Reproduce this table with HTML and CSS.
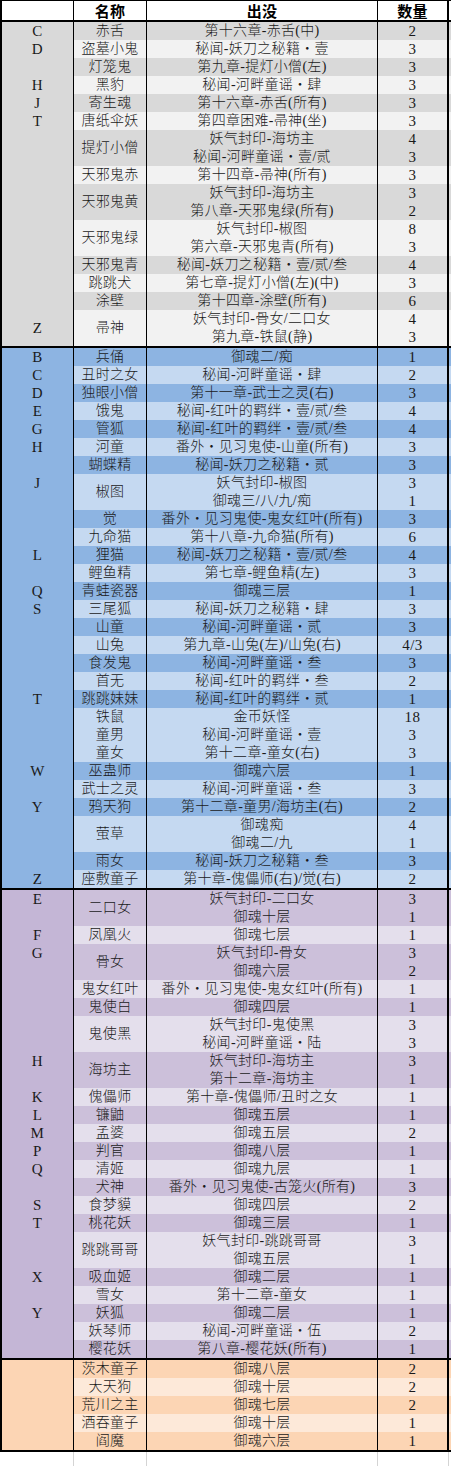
FILE: index.html
```html
<!DOCTYPE html>
<html lang="zh-CN">
<head>
<meta charset="utf-8">
<title>式神出没</title>
<link rel="stylesheet" href="styles.css">
</head>
<body>
<div class="sheet">
  <div class="head">
    <div class="c c1"></div><div class="c c2">名称</div><div class="c c3">出没</div><div class="c c4">数量</div><div class="c c5"></div>
  </div>

  <div class="group g1">
    <div class="entry d"><div class="c c1">C</div><div class="c c2">赤舌</div><div class="c c3">第十六章-赤舌(中)</div><div class="c c4">2</div><div class="c c5"></div></div>
    <div class="entry l"><div class="c c1">D</div><div class="c c2">盗墓小鬼</div><div class="c c3">秘闻-妖刀之秘籍・壹</div><div class="c c4">3</div><div class="c c5"></div></div>
    <div class="entry d"><div class="c c1"></div><div class="c c2">灯笼鬼</div><div class="c c3">第九章-提灯小僧(左)</div><div class="c c4">3</div><div class="c c5"></div></div>
    <div class="entry l"><div class="c c1">H</div><div class="c c2">黑豹</div><div class="c c3">秘闻-河畔童谣・肆</div><div class="c c4">3</div><div class="c c5"></div></div>
    <div class="entry d"><div class="c c1">J</div><div class="c c2">寄生魂</div><div class="c c3">第十六章-赤舌(所有)</div><div class="c c4">3</div><div class="c c5"></div></div>
    <div class="entry l"><div class="c c1">T</div><div class="c c2">唐纸伞妖</div><div class="c c3">第四章困难-帚神(坐)</div><div class="c c4">3</div><div class="c c5"></div></div>
    <div class="entry d"><div class="c c1 s2"></div><div class="c c2 s2">提灯小僧</div><div class="c c3">妖气封印-海坊主</div><div class="c c4">4</div><div class="c c5"></div><div class="c c3">秘闻-河畔童谣・壹/贰</div><div class="c c4">3</div><div class="c c5"></div></div>
    <div class="entry l"><div class="c c1"></div><div class="c c2">天邪鬼赤</div><div class="c c3">第十四章-帚神(所有)</div><div class="c c4">3</div><div class="c c5"></div></div>
    <div class="entry d"><div class="c c1 s2"></div><div class="c c2 s2">天邪鬼黄</div><div class="c c3">妖气封印-海坊主</div><div class="c c4">3</div><div class="c c5"></div><div class="c c3">第八章-天邪鬼绿(所有)</div><div class="c c4">2</div><div class="c c5"></div></div>
    <div class="entry l"><div class="c c1 s2"></div><div class="c c2 s2">天邪鬼绿</div><div class="c c3">妖气封印-椒图</div><div class="c c4">8</div><div class="c c5"></div><div class="c c3">第六章-天邪鬼青(所有)</div><div class="c c4">3</div><div class="c c5"></div></div>
    <div class="entry d"><div class="c c1"></div><div class="c c2">天邪鬼青</div><div class="c c3">秘闻-妖刀之秘籍・壹/贰/叁</div><div class="c c4">4</div><div class="c c5"></div></div>
    <div class="entry l"><div class="c c1"></div><div class="c c2">跳跳犬</div><div class="c c3">第七章-提灯小僧(左)(中)</div><div class="c c4">3</div><div class="c c5"></div></div>
    <div class="entry d"><div class="c c1"></div><div class="c c2">涂壁</div><div class="c c3">第十四章-涂壁(所有)</div><div class="c c4">6</div><div class="c c5"></div></div>
    <div class="entry l"><div class="c c1 s2">Z</div><div class="c c2 s2">帚神</div><div class="c c3">妖气封印-骨女/二口女</div><div class="c c4">4</div><div class="c c5"></div><div class="c c3">第九章-铁鼠(静)</div><div class="c c4">3</div><div class="c c5"></div></div>
  </div>

  <div class="group g2">
    <div class="entry d"><div class="c c1">B</div><div class="c c2">兵俑</div><div class="c c3">御魂二/痴</div><div class="c c4">1</div><div class="c c5"></div></div>
    <div class="entry l"><div class="c c1">C</div><div class="c c2">丑时之女</div><div class="c c3">秘闻-河畔童谣・肆</div><div class="c c4">2</div><div class="c c5"></div></div>
    <div class="entry d"><div class="c c1">D</div><div class="c c2">独眼小僧</div><div class="c c3">第十一章-武士之灵(右)</div><div class="c c4">3</div><div class="c c5"></div></div>
    <div class="entry l"><div class="c c1">E</div><div class="c c2">饿鬼</div><div class="c c3">秘闻-红叶的羁绊・壹/贰/叁</div><div class="c c4">4</div><div class="c c5"></div></div>
    <div class="entry d"><div class="c c1">G</div><div class="c c2">管狐</div><div class="c c3">秘闻-红叶的羁绊・壹/贰/叁</div><div class="c c4">4</div><div class="c c5"></div></div>
    <div class="entry l"><div class="c c1">H</div><div class="c c2">河童</div><div class="c c3">番外・见习鬼使-山童(所有)</div><div class="c c4">3</div><div class="c c5"></div></div>
    <div class="entry d"><div class="c c1"></div><div class="c c2">蝴蝶精</div><div class="c c3">秘闻-妖刀之秘籍・贰</div><div class="c c4">3</div><div class="c c5"></div></div>
    <div class="entry l"><div class="c c1 s2 top">J</div><div class="c c2 s2">椒图</div><div class="c c3">妖气封印-椒图</div><div class="c c4">3</div><div class="c c5"></div><div class="c c3">御魂三/八/九/痴</div><div class="c c4">1</div><div class="c c5"></div></div>
    <div class="entry d"><div class="c c1"></div><div class="c c2">觉</div><div class="c c3">番外・见习鬼使-鬼女红叶(所有)</div><div class="c c4">3</div><div class="c c5"></div></div>
    <div class="entry l"><div class="c c1"></div><div class="c c2">九命猫</div><div class="c c3">第十八章-九命猫(所有)</div><div class="c c4">6</div><div class="c c5"></div></div>
    <div class="entry d"><div class="c c1">L</div><div class="c c2">狸猫</div><div class="c c3">秘闻-妖刀之秘籍・壹/贰/叁</div><div class="c c4">4</div><div class="c c5"></div></div>
    <div class="entry l"><div class="c c1"></div><div class="c c2">鲤鱼精</div><div class="c c3">第七章-鲤鱼精(左)</div><div class="c c4">3</div><div class="c c5"></div></div>
    <div class="entry d"><div class="c c1">Q</div><div class="c c2">青蛙瓷器</div><div class="c c3">御魂三层</div><div class="c c4">1</div><div class="c c5"></div></div>
    <div class="entry l"><div class="c c1">S</div><div class="c c2">三尾狐</div><div class="c c3">秘闻-妖刀之秘籍・肆</div><div class="c c4">3</div><div class="c c5"></div></div>
    <div class="entry d"><div class="c c1"></div><div class="c c2">山童</div><div class="c c3">秘闻-河畔童谣・贰</div><div class="c c4">3</div><div class="c c5"></div></div>
    <div class="entry l"><div class="c c1"></div><div class="c c2">山兔</div><div class="c c3">第九章-山兔(左)/山兔(右)</div><div class="c c4">4/3</div><div class="c c5"></div></div>
    <div class="entry d"><div class="c c1"></div><div class="c c2">食发鬼</div><div class="c c3">秘闻-河畔童谣・叁</div><div class="c c4">3</div><div class="c c5"></div></div>
    <div class="entry l"><div class="c c1"></div><div class="c c2">首无</div><div class="c c3">秘闻-红叶的羁绊・叁</div><div class="c c4">2</div><div class="c c5"></div></div>
    <div class="entry d"><div class="c c1">T</div><div class="c c2">跳跳妹妹</div><div class="c c3">秘闻-红叶的羁绊・贰</div><div class="c c4">1</div><div class="c c5"></div></div>
    <div class="entry l"><div class="c c1"></div><div class="c c2">铁鼠</div><div class="c c3">金币妖怪</div><div class="c c4">18</div><div class="c c5"></div></div>
    <div class="entry l"><div class="c c1"></div><div class="c c2">童男</div><div class="c c3">秘闻-河畔童谣・壹</div><div class="c c4">3</div><div class="c c5"></div></div>
    <div class="entry l"><div class="c c1"></div><div class="c c2">童女</div><div class="c c3">第十二章-童女(右)</div><div class="c c4">3</div><div class="c c5"></div></div>
    <div class="entry d"><div class="c c1">W</div><div class="c c2">巫蛊师</div><div class="c c3">御魂六层</div><div class="c c4">1</div><div class="c c5"></div></div>
    <div class="entry l"><div class="c c1"></div><div class="c c2">武士之灵</div><div class="c c3">秘闻-河畔童谣・叁</div><div class="c c4">3</div><div class="c c5"></div></div>
    <div class="entry d"><div class="c c1">Y</div><div class="c c2">鸦天狗</div><div class="c c3">第十二章-童男/海坊主(右)</div><div class="c c4">2</div><div class="c c5"></div></div>
    <div class="entry l"><div class="c c1 s2"></div><div class="c c2 s2">萤草</div><div class="c c3">御魂痴</div><div class="c c4">4</div><div class="c c5"></div><div class="c c3">御魂二/九</div><div class="c c4">1</div><div class="c c5"></div></div>
    <div class="entry d"><div class="c c1"></div><div class="c c2">雨女</div><div class="c c3">秘闻-妖刀之秘籍・叁</div><div class="c c4">3</div><div class="c c5"></div></div>
    <div class="entry l"><div class="c c1">Z</div><div class="c c2">座敷童子</div><div class="c c3">第十章-傀儡师(右)/觉(右)</div><div class="c c4">2</div><div class="c c5"></div></div>
  </div>

  <div class="group g3">
    <div class="entry d"><div class="c c1 s2 top">E</div><div class="c c2 s2">二口女</div><div class="c c3">妖气封印-二口女</div><div class="c c4">3</div><div class="c c5"></div><div class="c c3">御魂十层</div><div class="c c4">1</div><div class="c c5"></div></div>
    <div class="entry l"><div class="c c1">F</div><div class="c c2">凤凰火</div><div class="c c3">御魂七层</div><div class="c c4">1</div><div class="c c5"></div></div>
    <div class="entry d"><div class="c c1 s2 top">G</div><div class="c c2 s2">骨女</div><div class="c c3">妖气封印-骨女</div><div class="c c4">3</div><div class="c c5"></div><div class="c c3">御魂六层</div><div class="c c4">2</div><div class="c c5"></div></div>
    <div class="entry l"><div class="c c1"></div><div class="c c2">鬼女红叶</div><div class="c c3">番外・见习鬼使-鬼女红叶(所有)</div><div class="c c4">1</div><div class="c c5"></div></div>
    <div class="entry d"><div class="c c1"></div><div class="c c2">鬼使白</div><div class="c c3">御魂四层</div><div class="c c4">1</div><div class="c c5"></div></div>
    <div class="entry l"><div class="c c1 s2"></div><div class="c c2 s2">鬼使黑</div><div class="c c3">妖气封印-鬼使黑</div><div class="c c4">3</div><div class="c c5"></div><div class="c c3">秘闻-河畔童谣・陆</div><div class="c c4">3</div><div class="c c5"></div></div>
    <div class="entry d"><div class="c c1 s2 top">H</div><div class="c c2 s2">海坊主</div><div class="c c3">妖气封印-海坊主</div><div class="c c4">3</div><div class="c c5"></div><div class="c c3">第十二章-海坊主</div><div class="c c4">1</div><div class="c c5"></div></div>
    <div class="entry l"><div class="c c1">K</div><div class="c c2">傀儡师</div><div class="c c3">第十章-傀儡师/丑时之女</div><div class="c c4">1</div><div class="c c5"></div></div>
    <div class="entry d"><div class="c c1">L</div><div class="c c2">镰鼬</div><div class="c c3">御魂五层</div><div class="c c4">1</div><div class="c c5"></div></div>
    <div class="entry l"><div class="c c1">M</div><div class="c c2">孟婆</div><div class="c c3">御魂五层</div><div class="c c4">2</div><div class="c c5"></div></div>
    <div class="entry d"><div class="c c1">P</div><div class="c c2">判官</div><div class="c c3">御魂八层</div><div class="c c4">1</div><div class="c c5"></div></div>
    <div class="entry l"><div class="c c1">Q</div><div class="c c2">清姬</div><div class="c c3">御魂九层</div><div class="c c4">1</div><div class="c c5"></div></div>
    <div class="entry d"><div class="c c1"></div><div class="c c2">犬神</div><div class="c c3">番外・见习鬼使-古笼火(所有)</div><div class="c c4">3</div><div class="c c5"></div></div>
    <div class="entry l"><div class="c c1">S</div><div class="c c2">食梦貘</div><div class="c c3">御魂四层</div><div class="c c4">2</div><div class="c c5"></div></div>
    <div class="entry d"><div class="c c1">T</div><div class="c c2">桃花妖</div><div class="c c3">御魂三层</div><div class="c c4">1</div><div class="c c5"></div></div>
    <div class="entry l"><div class="c c1 s2"></div><div class="c c2 s2">跳跳哥哥</div><div class="c c3">妖气封印-跳跳哥哥</div><div class="c c4">3</div><div class="c c5"></div><div class="c c3">御魂五层</div><div class="c c4">1</div><div class="c c5"></div></div>
    <div class="entry d"><div class="c c1">X</div><div class="c c2">吸血姬</div><div class="c c3">御魂二层</div><div class="c c4">1</div><div class="c c5"></div></div>
    <div class="entry l"><div class="c c1"></div><div class="c c2">雪女</div><div class="c c3">第十二章-童女</div><div class="c c4">1</div><div class="c c5"></div></div>
    <div class="entry d"><div class="c c1">Y</div><div class="c c2">妖狐</div><div class="c c3">御魂二层</div><div class="c c4">1</div><div class="c c5"></div></div>
    <div class="entry l"><div class="c c1"></div><div class="c c2">妖琴师</div><div class="c c3">秘闻-河畔童谣・伍</div><div class="c c4">2</div><div class="c c5"></div></div>
    <div class="entry d"><div class="c c1"></div><div class="c c2">樱花妖</div><div class="c c3">第八章-樱花妖(所有)</div><div class="c c4">1</div><div class="c c5"></div></div>
  </div>

  <div class="group g4">
    <div class="entry d"><div class="c c1"></div><div class="c c2">茨木童子</div><div class="c c3">御魂八层</div><div class="c c4">2</div><div class="c c5"></div></div>
    <div class="entry l"><div class="c c1"></div><div class="c c2">大天狗</div><div class="c c3">御魂十层</div><div class="c c4">2</div><div class="c c5"></div></div>
    <div class="entry d"><div class="c c1"></div><div class="c c2">荒川之主</div><div class="c c3">御魂七层</div><div class="c c4">2</div><div class="c c5"></div></div>
    <div class="entry l"><div class="c c1"></div><div class="c c2">酒吞童子</div><div class="c c3">御魂十层</div><div class="c c4">1</div><div class="c c5"></div></div>
    <div class="entry d"><div class="c c1"></div><div class="c c2">阎魔</div><div class="c c3">御魂六层</div><div class="c c4">1</div><div class="c c5"></div></div>
  </div>

  <div class="blank">
    <div class="c c1"></div><div class="c c2"></div><div class="c c3"></div><div class="c c4"></div><div class="c c5"></div>
  </div>
</div>
</body>
</html>
```

FILE: styles.css
```css
* {
  box-sizing: border-box;
  margin: 0;
  padding: 0;
}

body {
  margin: 0;
  background: #ffffff;
  font-family: "Liberation Serif", "Noto Sans CJK SC", serif;
  font-size: 14px;
  font-weight: 300;
  color: #1a1a1a;
}

.sheet {
  width: 451px;
}

.head,
.entry,
.blank {
  display: grid;
  grid-template-columns: 74px 73px 231px 71px 2px;
}

.entry {
  grid-auto-rows: 18px;
}

.head {
  height: 20px;
  border-top: 1px solid #000;
  background: #ffffff;
}

.head .c {
  font-family: "Noto Sans CJK SC", sans-serif;
  font-weight: 700;
  font-size: 15px;
  color: #000;
}

.c {
  display: flex;
  align-items: center;
  justify-content: center;
  line-height: 18px;
  white-space: nowrap;
  overflow: hidden;
  border-right: 1px solid #000;
  letter-spacing: 0.3px;
}

.entry .c1,
.entry .c4 {
  font-size: 15px;
  letter-spacing: 0.5px;
}

.c1 {
  border-left: 2px solid #000;
}

.c4 {
  border-right: 2px solid #000;
}

.c5 {
  border-right: 0;
}

.s2 {
  grid-row: span 2;
}

.top {
  align-items: flex-start;
}

.group {
  border-top: 2px solid #000;
}

.g4 {
  border-bottom: 2px solid #000;
}

.g1 { --dk: #d9d9d9; --lt: #f2f2f2; --lc: #d9d9d9; }
.g2 { --dk: #8db4e2; --lt: #c5d9f1; --lc: #8db4e2; }
.g3 { --dk: #ccc0da; --lt: #e4dfec; --lc: #c4b6d6; }
.g4 { --dk: #fcd5b4; --lt: #fde9d9; --lc: #fcd5b4; }

.entry .c1 {
  background: var(--lc);
}

.entry.d .c2,
.entry.d .c3,
.entry.d .c4,
.entry.d .c5 {
  background: var(--dk);
}

.entry.l .c2,
.entry.l .c3,
.entry.l .c4,
.entry.l .c5 {
  background: var(--lt);
}

.blank {
  height: 18px;
}

.blank .c {
  border-right: 1px solid #d4d4d4;
  border-bottom: 1px solid #d4d4d4;
}

.blank .c1 {
  border-left: 2px solid #ffffff;
}

.blank .c5 {
  border-right: 0;
}
```
